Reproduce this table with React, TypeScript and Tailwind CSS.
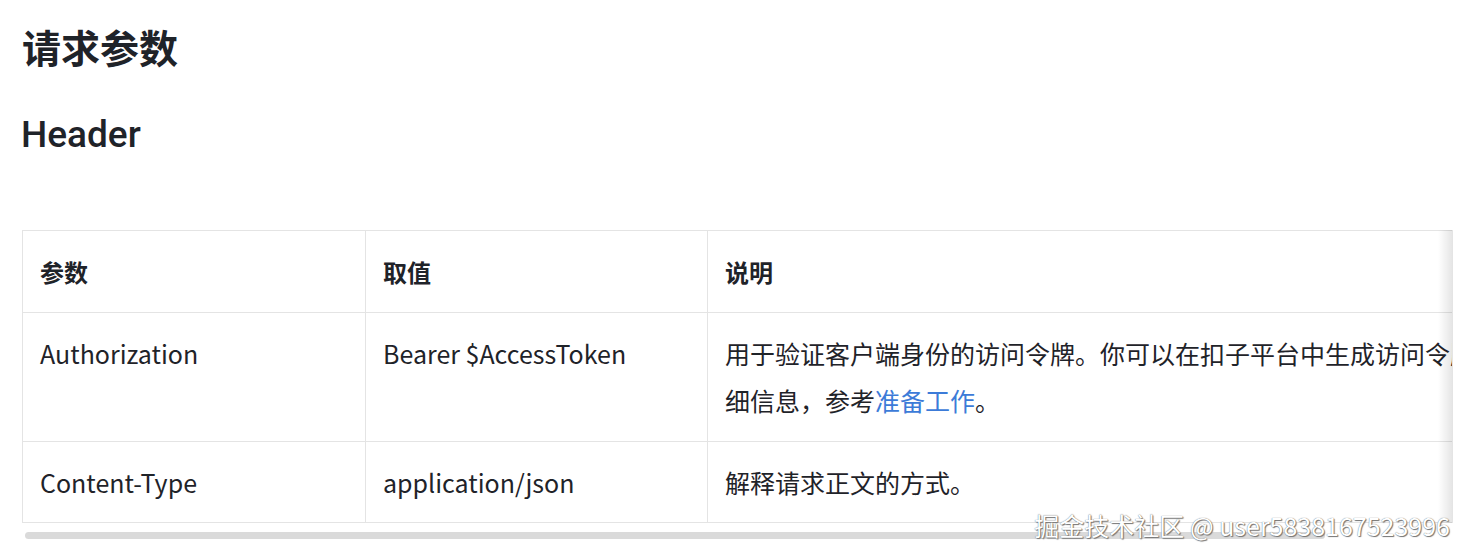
import React from 'react';

const font = { fontFamily: '"Noto Sans CJK SC", "Liberation Sans", sans-serif' };

export default function App() {
    return (
        <div className="relative w-full h-[558px] overflow-hidden bg-white text-[#1f2329]" style={font}>
            {/* Title */}
            <h1 className="ml-[22px] mt-[18px] text-[39px] leading-[56px] font-bold">请求参数</h1>
            <h2
                className="ml-[21px] mt-[37px] text-[37px] leading-[48px] font-medium"
                style={{ fontFamily: 'Roboto, "Liberation Sans", "Noto Sans CJK SC", sans-serif' }}
            >
                Header
            </h2>

            {/* Table */}
            <div className="relative ml-[22px] mt-[71px] w-[1431px] overflow-hidden border-r border-[#e4e4e4]">
                <table className="table-fixed border-collapse text-[25px] leading-[47px]" style={{ width: 1530 }}>
                    <colgroup>
                        <col className="w-[343px]" />
                        <col className="w-[342px]" />
                        <col className="w-[845px]" />
                    </colgroup>
                    <thead>
                        <tr>
                            <th className="border border-[#e4e4e4] px-[17px] py-[17px] text-left text-[24px] font-bold">参数</th>
                            <th className="border border-[#e4e4e4] px-[17px] py-[17px] text-left text-[24px] font-bold">取值</th>
                            <th className="border border-[#e4e4e4] px-[17px] py-[17px] text-left text-[24px] font-bold">说明</th>
                        </tr>
                    </thead>
                    <tbody>
                        <tr>
                            <td className="border border-[#e4e4e4] px-[17px] py-[17px] align-top">Authorization</td>
                            <td className="border border-[#e4e4e4] px-[17px] py-[17px] align-top">Bearer $AccessToken</td>
                            <td className="border border-[#e4e4e4] px-[17px] py-[17px] align-top">
                                用于验证客户端身份的访问令牌。你可以在扣子平台中生成访问令牌，详细信息，参考
                                <a href="#" className="text-[#3c7bd8]">准备工作</a>。
                            </td>
                        </tr>
                        <tr>
                            <td className="border border-[#e4e4e4] px-[17px] pt-[17px] pb-[16px] align-top">Content-Type</td>
                            <td className="border border-[#e4e4e4] px-[17px] pt-[17px] pb-[16px] align-top">application/json</td>
                            <td className="border border-[#e4e4e4] px-[17px] pt-[17px] pb-[16px] align-top">解释请求正文的方式。</td>
                        </tr>
                    </tbody>
                </table>
                {/* right scroll shadow */}
                <div className="pointer-events-none absolute right-0 top-0 bottom-0 w-[14px] bg-gradient-to-r from-transparent to-black/10" />
            </div>

            {/* Scrollbar */}
            <div className="ml-[25px] mt-[9px] h-[7px] w-[1300px] rounded-full bg-[#dadada]" />

            {/* Watermark */}
            <div
                className="absolute right-[16px] top-[508px] text-[25px] leading-[34px] text-white"
                style={{ textShadow: '0 0 1px #555, 1px 1px 1px #777' }}
            >
                掘金技术社区 @ user5838167523996
            </div>
        </div>
    );
}
